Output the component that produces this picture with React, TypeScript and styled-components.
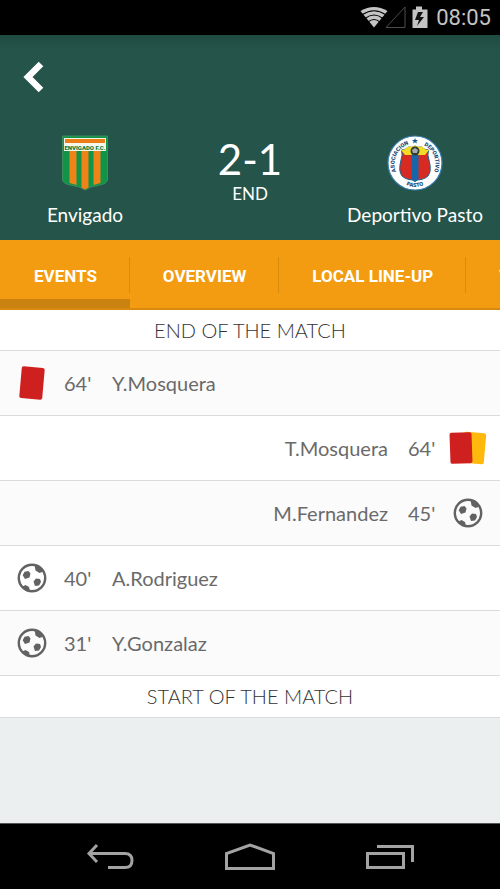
import React from "react";
import styled, { createGlobalStyle } from "styled-components";

const GlobalStyle = createGlobalStyle`
  * { box-sizing: border-box; }
  body { margin: 0; background: #ebeff0; }
  button { border: 0; padding: 0; background: none; font: inherit; color: inherit; cursor: pointer; }
  svg { display: block; flex: none; }
`;

const Screen = styled.div`
  min-height: 100vh;
  display: flex;
  flex-direction: column;
  overflow: hidden;
  font-family: Lato, sans-serif;
  color: #6a6a6a;
`;

const StatusBar = styled.div`
  height: 35px;
  padding-right: 9px;
  display: flex;
  align-items: center;
  justify-content: flex-end;
  background: #000;
  color: #c4c4c4;
  font: 22px/36px Roboto, sans-serif;
`;

const Clock = styled.time`
  margin-left: 8px;
`;

const Header = styled.header`
  height: 205px;
  background: linear-gradient(#1f4a41, #25544a 14px);
  color: #fff;
`;

const BackButton = styled.button`
  display: grid;
  place-items: center;
  width: 68px;
  height: 84px;
`;

const Scoreboard = styled.div`
  display: grid;
  grid-template-columns: 17fr 16fr 17fr;
  padding-top: 16px;
`;

const Team = styled.div`
  display: flex;
  flex-direction: column;
  align-items: center;
  gap: 12px;
  font-size: 19px;
  line-height: 24px;
  white-space: nowrap;
`;

const Result = styled.div`
  display: flex;
  flex-direction: column;
  align-items: center;
`;

const Score = styled.strong`
  font-size: 42px;
  line-height: 48px;
  font-weight: 400;
`;

const Status = styled.span`
  font-size: 17px;
  line-height: 22px;
`;

const Tabs = styled.nav`
  display: flex;
  height: 70px;
  overflow-x: auto;
  overflow-y: hidden;
  scrollbar-width: none;
  background: #f39c12;
  border-bottom: 2px solid #d98a0e;
`;

const Tab = styled.button<{ $active?: boolean }>`
  flex: none;
  display: flex;
  align-items: center;
  height: 70px;
  && {
    padding: 0 0 0 ${(p) => (p.$active ? 2 : 1)}px;
    color: #fff;
    font: 700 17px/70px Roboto, sans-serif;
    box-shadow: ${(p) => (p.$active ? "inset 0 -11px #ca8311" : "none")};
  }
`;

const TabLabel = styled.span`
  padding: 0 32px;
  height: 36px;
  line-height: 38px;
  border-right: 1px solid #d98b10;
`;

const Timeline = styled.ol`
  list-style: none;
  margin: 0;
  padding: 0;
  font-size: 20px;
`;

const Marker = styled.li<{ $tall?: boolean }>`
  height: ${(p) => (p.$tall ? 42 : 41)}px;
  line-height: 41px;
  text-align: center;
  font-weight: 300;
  color: #333;
  background: #fff;
  border-bottom: 1px solid #d9dcdc;
`;

const Event = styled.li<{ $away?: boolean; $shaded?: boolean }>`
  display: flex;
  flex-direction: ${(p) => (p.$away ? "row-reverse" : "row")};
  align-items: center;
  height: 65px;
  padding: 0 12px;
  background: ${(p) => (p.$shaded ? "#fbfbfb" : "#fff")};
  border-bottom: 1px solid #d9dcdc;
`;

const IconBox = styled.span`
  display: grid;
  place-items: center;
  width: 40px;
`;

const Minute = styled.span`
  width: 28px;
  margin: 0 12px;
  text-align: left;
`;

const Player = styled.span`
  margin: 0 8px;
`;

const NavBar = styled.nav`
  height: 66px;
  margin-top: auto;
  display: grid;
  grid-template-columns: repeat(3, 28%);
  justify-content: center;
  background: #000;
  border-top: 1px solid #555;
`;

const NavButton = styled.button`
  display: grid;
  place-items: center;
`;

const StatusIcons = () => (
  <svg width="68" height="24" viewBox="0 0 68 24" role="img" aria-label="Wi-Fi, no signal, charging">
    <path d="M14 21.5 0.5 5Q14-3 27.500 5Z" fill="#c4c4c4" />
    <g fill="none" stroke="#000" strokeWidth="1.2">
      <path d="M2.500 8.500Q14 1 25.500 8.500" />
      <path d="M5 12.500Q14 5.500 23 12.500" />
      <path d="M8 16Q14 11 20 16" />
    </g>
    <path d="M26 21.500H45V1Z" fill="none" stroke="#4c4c4c" />
    <path d="M56 .5h6v3h5.500v18.500h-15V3.500H56z" fill="#c4c4c4" />
    <path d="m58 6-3 8h4l-2 6 7-9h-4l3-5z" fill="#111" />
  </svg>
);

const EnvigadoCrest = () => (
  <svg width="46" height="56" viewBox="0 0 46 56" role="img" aria-label="Envigado F.C.">
    <path d="M.5 1h45v44q-1 4-8 5-10 1.500-14.500 5-4.500-3.500-14.500-5Q1.500 49 .5 45z" fill="#109447" stroke="#3c8e5c" />
    <path d="M7.500 16h7v34l-7-2zM19.500 16h7v36.500l-3.500 2-3.500-2zM31.500 16h7v32l-7 2z" fill="#ef8218" />
    <path d="M2 3h42v13H2z" fill="#f4f7e9" />
    <path d="M3 4h40v4H3z" fill="#ef7d17" />
    <text x="23" y="14.500" textAnchor="middle" fontFamily="Roboto, sans-serif" fontSize="6" fontWeight="900" fill="#087b3c">ENVIGADO F.C.</text>
  </svg>
);

const PastoCrest = () => (
  <svg width="56" height="56" viewBox="0 0 56 56" role="img" aria-label="Asociación Deportivo Pasto">
    <defs>
      <path id="crest-arc" d="M9 36.500A20.500 20.500 0 1 1 47 36.500" />
      <path id="crest-base" d="M13 46Q28 58 43 46" />
    </defs>
    <circle cx="28" cy="28" r="27" fill="#fff" stroke="#3d7fae" strokeWidth="1.200" />
    <path d="M14.500 15q4 0 7-3 3.500 1 6.500-1 3 2 6.500 1 3 3 7 3-1.500 5 .5 10 3 11-1 16-3 3-7 3.500-3.500 0-6 2-2.500-2-6-2-4-.5-7-3.500-4-5-1-16 2-5 .5-10z" fill="#d62a23" stroke="#17668f" />
    <path d="M24.500 17h7v27.500q-2 .5-3.500 1.500-1.500-1-3.500-1.500z" fill="#1766a9" />
    <path d="M14 15q4 0 7-3.500 3.500 1 7-1 3.500 2 7 1 3 3.500 7 3.500l-4 5H18z" fill="#f4dc24" />
    <circle cx="28" cy="16" r="4.500" fill="#343e36" />
    <path d="m28 13 3 2-1 3h-4l-1-3z" fill="#aaa" />
    <path d="m28 3 .8 2h2.200l-1.700 1.400.7 2.100-2-1.300-2 1.300.7-2.100L25 5h2.200z" fill="#175a96" />
    <g fontFamily="Roboto, sans-serif" fontSize="5.600" fontWeight="900" fill="#174c78">
      <text><textPath href="#crest-arc" startOffset="0">ASOCIACION</textPath></text>
      <text textAnchor="end"><textPath href="#crest-arc" startOffset="100%">DEPORTIVO</textPath></text>
      <text textAnchor="middle"><textPath href="#crest-base" startOffset="50%">PASTO</textPath></text>
    </g>
  </svg>
);

const Ball = () => (
  <svg width="30" height="30" viewBox="0 0 30 30" role="img" aria-label="Goal">
    <circle cx="15" cy="15" r="13.200" fill="none" stroke="#626262" strokeWidth="2.400" />
    <g fill="#626262">
      <path d="m5.700 12.200 1.800-3.400 4-.8 2 2.500-1 4-4.500 1.500z" />
      <path d="m16.500 18.500 2.500-3 4 .5 1 3-2 3.500-4 .5z" />
      <path d="M17.500 2 18.500 7.500l4 2.500 4-1.500Q23 3 17.500 2Z" />
      <path d="m5.500 23.500 3-1.500 3.500 2 1 4Q9 28 5.500 23.500Z" />
    </g>
  </svg>
);

const RedCard = () => (
  <svg width="28" height="36" viewBox="0 0 28 36" role="img" aria-label="Red card">
    <rect x="2.500" y="2" width="23" height="32" rx="2" fill="#cf2020" transform="rotate(5 14 18)" />
  </svg>
);

const SecondYellow = () => (
  <svg width="40" height="34" viewBox="0 0 40 34" role="img" aria-label="Second yellow card">
    <rect x="15" y="1.500" width="22" height="31" rx="2" fill="#ffb80b" transform="rotate(5 26 17)" />
    <rect x="2" y="1.500" width="22" height="31" rx="2" fill="#cf2020" transform="rotate(-2 13 17)" />
  </svg>
);

const icons = { ball: Ball, red: RedCard, second: SecondYellow };

const events: { icon: keyof typeof icons; minute: number; player: string; away?: boolean }[] = [
  { icon: "red", minute: 64, player: "Y.Mosquera" },
  { icon: "second", minute: 64, player: "T.Mosquera", away: true },
  { icon: "ball", minute: 45, player: "M.Fernandez", away: true },
  { icon: "ball", minute: 40, player: "A.Rodriguez" },
  { icon: "ball", minute: 31, player: "Y.Gonzalaz" },
];

const tabs = ["EVENTS", "OVERVIEW", "LOCAL LINE-UP", "VISITOR LINE-UP"];

export default function App() {
  return (
    <Screen>
      <GlobalStyle />
      <StatusBar>
        <StatusIcons />
        <Clock>08:05</Clock>
      </StatusBar>
      <Header>
        <BackButton aria-label="Back">
          <svg width="22" height="32" viewBox="0 0 22 32">
            <path d="M18 3 5 16l13 13" fill="none" stroke="#fff" strokeWidth="6.500" />
          </svg>
        </BackButton>
        <Scoreboard>
          <Team>
            <EnvigadoCrest />
            Envigado
          </Team>
          <Result>
            <Score>2-1</Score>
            <Status>END</Status>
          </Result>
          <Team>
            <PastoCrest />
            Deportivo Pasto
          </Team>
        </Scoreboard>
      </Header>
      <Tabs>
        {tabs.map((label, i) => (
          <Tab key={label} $active={i === 0}>
            <TabLabel>{label}</TabLabel>
          </Tab>
        ))}
      </Tabs>
      <Timeline>
        <Marker>END OF THE MATCH</Marker>
        {events.map((e, i) => {
          const Icon = icons[e.icon];
          return (
            <Event key={e.player} $away={e.away} $shaded={i % 2 === 0}>
              <IconBox><Icon /></IconBox>
              <Minute>{e.minute}'</Minute>
              <Player>{e.player}</Player>
            </Event>
          );
        })}
        <Marker $tall>START OF THE MATCH</Marker>
      </Timeline>
      <NavBar aria-label="System">
        <NavButton aria-label="Back">
          <svg width="48" height="28" viewBox="0 0 48 28" fill="none" stroke="#a3a3a3" strokeWidth="3">
            <path d="M11 2 3 10.500 11 19M3 10.500h36q7 0 7 7t-7 7H22" />
          </svg>
        </NavButton>
        <NavButton aria-label="Home">
          <svg width="50" height="28" viewBox="0 0 50 28" fill="none" stroke="#a3a3a3" strokeWidth="3">
            <path d="M1.500 25.500v-15L25 2l23.500 8.500v15z" />
          </svg>
        </NavButton>
        <NavButton aria-label="Recent apps">
          <svg width="48" height="26" viewBox="0 0 48 26" fill="none" stroke="#a3a3a3" strokeWidth="3">
            <path d="M1.500 9.500h36v14h-36zM11 2.500h35.500V18" />
          </svg>
        </NavButton>
      </NavBar>
    </Screen>
  );
}
